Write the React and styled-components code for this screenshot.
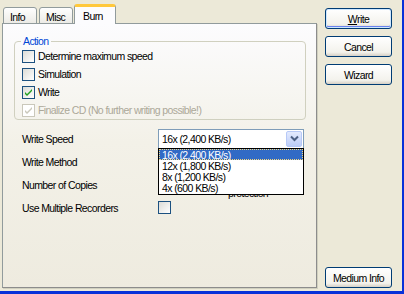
import React from 'react';
import styled, { createGlobalStyle } from 'styled-components';

const GlobalStyle = createGlobalStyle`
  html, body { margin: 0; padding: 0; }
  body {
    background: #ece9d8;
    font-family: "Liberation Sans", Arial, sans-serif;
    font-size: 10.5px;
    letter-spacing: -0.6px;
    color: #000;
  }
`;

const Window = styled.div`
  width: 404px;
  height: 294px;
  box-sizing: border-box;
  background: #ece9d8;
  border-right: 2px solid #0831d9;
  border-bottom: 3px solid #0831d9;
  display: flex;
  padding: 4px 0 0 2px;
  overflow: hidden;
`;

const Left = styled.div`
  width: 315px;
  display: flex;
  flex-direction: column;
  padding-bottom: 3px;
`;

const TabRow = styled.div`
  display: flex;
  align-items: flex-end;
  height: 20px;
  padding-left: 1px;
  position: relative;
  z-index: 2;
`;

const Tab = styled.div`
  height: ${p => (p.$active ? '20px' : '17px')};
  box-sizing: border-box;
  width: ${p => p.$w}px;
  padding: ${p => (p.$active ? '3px 0 0 8px' : '3px 0 0 6px')};
  margin-right: ${p => (p.$active ? '0' : '2px')};
  margin-left: ${p => (p.$active ? '-1px' : '0')};
  background: ${p => (p.$active ? '#fcfcfe' : 'linear-gradient(#fefefe, #ecebe6)')};
  border: 1px solid #919b9c;
  border-bottom: ${p => (p.$active ? 'none' : '1px solid #919b9c')};
  border-top: ${p => (p.$active ? '3px solid #ffc83c' : '1px solid #919b9c')};
  border-radius: 3px 3px 0 0;
`;

const Panel = styled.div`
  flex: 1;
  margin-top: -1px;
  border: 1px solid #919b9c;
  border-right-color: #8c8c8c;
  border-bottom-color: #8c8c8c;
  box-shadow: 1px 1px 0 #d0d0bf;
  padding: 17px 10px 0 11px;
  background: linear-gradient(#fcfcfe, #f3f1e8 45%, #eeebdf);
`;

const Group = styled.div`
  position: relative;
  width: 292px;
  height: 79px;
  box-sizing: border-box;
  border: 1px solid #d0d0bf;
  border-radius: 4px;
  padding: 5px 0 0 7px;
`;

const Legend = styled.span`
  position: absolute;
  top: -7px;
  left: 6px;
  padding: 0 2px;
  color: #0046d5;
  background: #fbfbfc;
  line-height: 12px;
`;

const CheckRow = styled.div`
  display: flex;
  align-items: center;
  height: 18px;
  gap: 3px;
  color: ${p => (p.$disabled ? '#aca899' : '#000')};
`;

const Box = styled.span`
  width: 11px;
  height: 11px;
  border: 1px solid ${p => (p.$disabled ? '#cac8bb' : '#1c5180')};
  background: ${p => (p.$disabled ? '#fff' : 'linear-gradient(135deg, #dcdcd7, #fff)')};
  display: inline-flex;
  align-items: center;
  justify-content: center;
  flex-shrink: 0;
`;

const Fields = styled.div`
  display: flex;
  flex-direction: column;
  margin-top: 7px;
  padding-left: 8px;
`;

const FieldRow = styled.div`
  display: flex;
  align-items: center;
  height: 23px;
`;

const FieldLabel = styled.div`
  width: 136px;
`;

const Select = styled.div`
  width: 146px;
  height: 20px;
  box-sizing: border-box;
  border: 1px solid #7f9db9;
  background: #fff;
  display: flex;
  align-items: center;
  padding: 1px 1px 1px 3px;
  position: relative;
`;

const SelectText = styled.div`
  flex: 1;
`;

const Arrow = styled.div`
  width: 16px;
  height: 16px;
  border-radius: 2px;
  background: linear-gradient(#e3eafe, #bccdf8);
  border: 1px solid #b7c9f7;
  box-sizing: border-box;
  display: flex;
  align-items: center;
  justify-content: center;
`;

const DropList = styled.div`
  position: absolute;
  left: -1px;
  top: 18px;
  width: 146px;
  box-sizing: border-box;
  border: 1px solid #000;
  background: #fff;
  z-index: 5;
  padding-bottom: 1px;
`;

const Option = styled.div`
  height: 11px;
  line-height: 10px;
  box-sizing: border-box;
  padding-left: 2px;
  background: ${p => (p.$selected ? '#316ac5' : '#fff')};
  color: ${p => (p.$selected ? '#fff' : '#000')};
  border: 1px dotted ${p => (p.$selected ? '#f5d67c' : 'transparent')};
`;

const Behind = styled.div`
  align-self: flex-start;
  margin-top: 15px;
  padding-left: 70px;
  line-height: 11px;
`;

const Buttons = styled.div`
  flex: 1;
  display: flex;
  flex-direction: column;
  padding: 4px 0 3px 8px;
  gap: 7px;
`;

const Btn = styled.div`
  width: 67px;
  height: 21px;
  box-sizing: border-box;
  border: 1px solid #003c74;
  border-radius: 3px;
  background: linear-gradient(#ffffff, #f3f2ec 80%, #d6d0c5);
  box-shadow: ${p => (p.$default ? 'inset 0 0 0 1px #cee7ff, inset 0 -1px 0 1px #6982ee' : 'none')};
  display: flex;
  align-items: center;
  justify-content: center;
  margin-top: ${p => (p.$bottom ? 'auto' : '0')};
`;

const Check = ({ color }) => (
  <svg width="9" height="9" viewBox="0 0 9 9">
    <path d="M1 4 L3 6 L8 1 L8 3 L3 8 L1 6 Z" fill={color} />
  </svg>
);

const Chevron = () => (
  <svg width="9" height="7" viewBox="0 0 9 7">
    <path d="M1 1.5 L4.5 5 L8 1.5" fill="none" stroke="#4d6185" strokeWidth="2" />
  </svg>
);

const speeds = ['16x (2,400 KB/s)', '12x (1,800 KB/s)', '8x (1,200 KB/s)', '4x (600 KB/s)'];

export default function App() {
  return (
    <>
      <GlobalStyle />
      <Window>
        <Left>
          <TabRow>
            <Tab $w={34}>Info</Tab>
            <Tab $w={34}>Misc</Tab>
            <Tab $w={42} $active>Burn</Tab>
          </TabRow>
          <Panel>
            <Group>
              <Legend>Action</Legend>
              <CheckRow><Box />Determine maximum speed</CheckRow>
              <CheckRow><Box />Simulation</CheckRow>
              <CheckRow><Box><Check color="#21a121" /></Box>Write</CheckRow>
              <CheckRow $disabled>
                <Box $disabled><Check color="#cac8bb" /></Box>
                Finalize CD (No further writing possible!)
              </CheckRow>
            </Group>
            <Fields>
              <FieldRow>
                <FieldLabel>Write Speed</FieldLabel>
                <Select>
                  <SelectText>16x (2,400 KB/s)</SelectText>
                  <Arrow><Chevron /></Arrow>
                  <DropList>
                    {speeds.map((s, i) => (
                      <Option key={s} $selected={i === 0}>{s}</Option>
                    ))}
                  </DropList>
                </Select>
              </FieldRow>
              <FieldRow>
                <FieldLabel>Write Method</FieldLabel>
              </FieldRow>
              <FieldRow>
                <FieldLabel>Number of Copies</FieldLabel>
                <Behind>protection</Behind>
              </FieldRow>
              <FieldRow>
                <FieldLabel>Use Multiple Recorders</FieldLabel>
                <Box />
              </FieldRow>
            </Fields>
          </Panel>
        </Left>
        <Buttons>
          <Btn $default><u>W</u>rite</Btn>
          <Btn>Cancel</Btn>
          <Btn>Wizard</Btn>
          <Btn $bottom>Medium Info</Btn>
        </Buttons>
      </Window>
    </>
  );
}
